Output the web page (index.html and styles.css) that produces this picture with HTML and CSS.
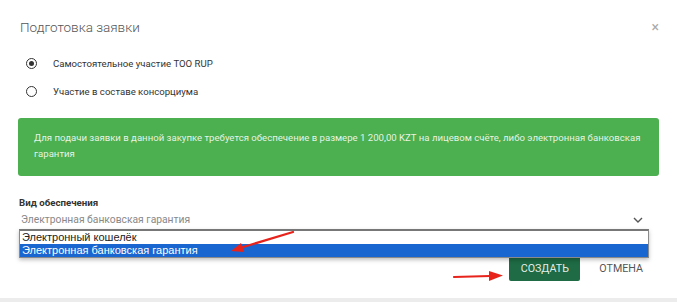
FILE: index.html
```html
<!DOCTYPE html>
<html lang="ru">
<head>
  <meta charset="UTF-8">
  <title>Подготовка заявки</title>
  <link rel="stylesheet" href="styles.css">
</head>
<body>
  <div class="modal">
    <div class="modal-head">
      <h2 class="modal-title">Подготовка заявки</h2>
      <span class="close">&times;</span>
    </div>

    <div class="radios">
      <label class="radio checked"><span class="dot"></span>Самостоятельное участие TOO RUP</label>
      <label class="radio"><span class="dot"></span>Участие в составе консорциума</label>
    </div>

    <div class="alert">
      Для подачи заявки в данной закупке требуется обеспечение в размере 1 200,00 KZT на лицевом счёте, либо электронная банковская гарантия
    </div>

    <div class="field">
      <div class="field-label">Вид обеспечения</div>
      <div class="select">
        <span>Электронная банковская гарантия</span>
        <svg class="chevron" width="10" height="6" viewBox="0 0 10 6"><path d="M1 1l4 4 4-4" fill="none" stroke="#555" stroke-width="1.4"/></svg>
      </div>
      <ul class="options">
        <li>Электронный кошелёк</li>
        <li class="selected">Электронная банковская гарантия</li>
      </ul>
    </div>

    <div class="modal-foot">
      <button class="btn btn-primary">Создать</button>
      <button class="btn btn-flat">Отмена</button>
    </div>

    <svg class="marks" width="677" height="302" viewBox="0 0 677 302">
      <line x1="293" y1="232" x2="240" y2="248" stroke="#e8231c" stroke-width="2.2" stroke-linecap="round"/>
      <polygon points="231,251 241,243 244,252" fill="#e8231c"/>
      <line x1="454" y1="277" x2="490" y2="276" stroke="#e8231c" stroke-width="2.2" stroke-linecap="round"/>
      <polygon points="503,275.5 489,271 489,281" fill="#e8231c"/>
    </svg>
  </div>
</body>
</html>
```

FILE: styles.css
```css
* {
  margin: 0;
  padding: 0;
  box-sizing: border-box;
}
body {
  background: #ececec;
  font-family: Roboto, "Noto Sans", sans-serif;
  color: #333;
}
.modal {
  position: relative;
  height: 298px;
  padding: 0 18px;
  background: #fff;
}
.modal-head {
  display: flex;
  justify-content: space-between;
  align-items: center;
  padding-top: 17px;
  height: 37px;
}
.modal-title {
  margin-left: 2px;
  font-size: 13.5px;
  font-weight: 300;
  line-height: 20px;
  color: #555;
}
.close {
  margin-right: 0;
  font-size: 14px;
  line-height: 20px;
  color: #aaa;
}
.radios {
  display: flex;
  flex-direction: column;
  margin-top: 12px;
}
.radio {
  display: flex;
  align-items: center;
  height: 28px;
  font-size: 9.6px;
  color: #333;
}
.dot {
  width: 11px;
  height: 11px;
  margin: 0 16px 0 8px;
  border: 1.6px solid #333;
  border-radius: 50%;
  display: flex;
  align-items: center;
  justify-content: center;
}
.radio.checked .dot::after {
  content: "";
  width: 5px;
  height: 5px;
  border-radius: 50%;
  background: #333;
}
.alert {
  margin-top: 13px;
  padding: 12px 16px 14px;
  border-radius: 3px;
  background: #4caf50;
  color: rgba(255, 255, 255, 0.88);
  font-size: 9.6px;
  line-height: 16px;
}
.field {
  position: relative;
  margin-top: 19px;
}
.field-label {
  margin-left: 1px;
  font-size: 9.7px;
  font-weight: 700;
  line-height: 16px;
  color: #333;
}
.select {
  display: flex;
  justify-content: space-between;
  align-items: center;
  height: 17px;
  padding: 0 16px 0 3px;
  font-size: 10.3px;
  color: #888;
}
.chevron {
  margin-top: 1px;
}
.options {
  position: absolute;
  top: 34px;
  left: 1px;
  width: 630px;
  list-style: none;
  border: 1px solid #8a8a8a;
  border-top: 2px solid #777;
  background: #fff;
  box-shadow: 0 2px 4px rgba(0, 0, 0, 0.25);
  font-family: "Liberation Sans", Arial, sans-serif;
  font-size: 11px;
  line-height: 13px;
  color: #222;
}
.options li {
  padding-left: 2px;
}
.options .selected {
  background: #1a66d1;
  color: #fff;
}
.modal-foot {
  display: flex;
  justify-content: flex-end;
  gap: 3px;
  margin-top: 28px;
}
.btn {
  height: 25px;
  border: none;
  border-radius: 2px;
  font-family: Roboto, sans-serif;
  font-size: 10.7px;
  text-transform: uppercase;
  background: none;
}
.btn-primary {
  width: 71px;
  background: #1e6b45;
  color: rgba(255, 255, 255, 0.9);
}
.btn-flat {
  padding: 0 16px;
  color: #555;
}
.marks {
  position: absolute;
  top: 0;
  left: 0;
  pointer-events: none;
}
```
